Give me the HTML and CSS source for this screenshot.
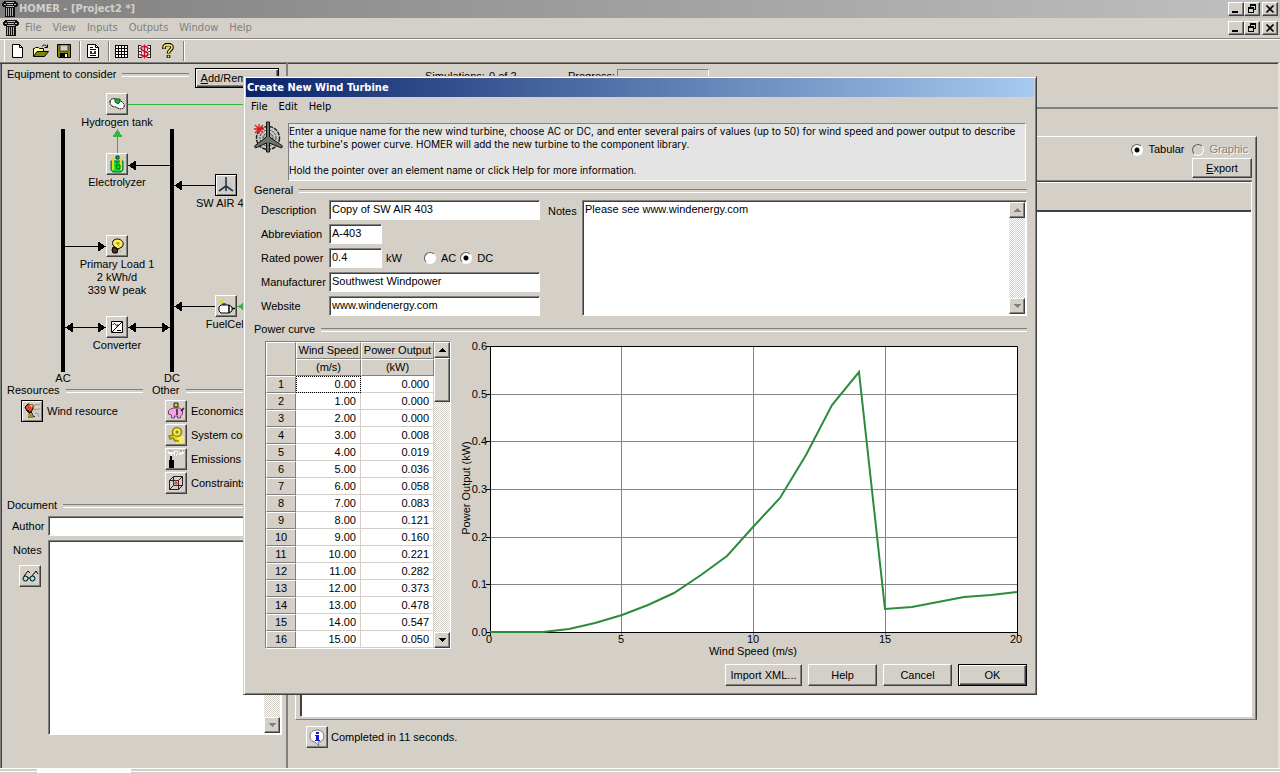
FILE: index.html
```html
<!DOCTYPE html>
<html lang="en">
<head>
<meta charset="utf-8">
<title>HOMER - [Project2 *]</title>
<link rel="stylesheet" href="styles.css">
</head>
<body>
<svg class="defs" aria-hidden="true">
  <symbol id="column" viewBox="0 0 16 16" shape-rendering="crispEdges"><path d="M2 0h12v1h1v1h1v3h-1v1h-2v10H3V6H1V5H0V2h1V1h1z" fill="#111"/><path d="M4.500 7v8M6.500 7v8M8.500 7v8M10.500 7v8" stroke="#aaa"/><path d="M4 1.500h8M2 3.500h2M12 3.500h2M5 3.500h6M4 5.500h8" stroke="#bbb"/></symbol>
  <symbol id="min" viewBox="0 0 12 10" shape-rendering="crispEdges"><path d="M2 7h6v2H2z"/></symbol>
  <symbol id="restore" viewBox="0 0 12 10" shape-rendering="crispEdges"><path d="M4.500 1v2M4 1h6M4 .5h6M9.500 1v5M8 5.500h2M2.500 3v6M2 4h6M2 3.500h6M7.500 3v6M2 8.500h6" fill="none" stroke="#000"/></symbol>
  <symbol id="close" viewBox="0 0 12 10"><path d="M2.500 1.500l7 7M9.500 1.500l-7 7" stroke="#000" stroke-width="1.600"/></symbol>
  <symbol id="up" viewBox="0 0 7 4" shape-rendering="crispEdges"><path d="M3 0h1v1h1v1h1v1h1v1H0V3h1V2h1V1h1z"/></symbol>
  <symbol id="down" viewBox="0 0 7 4" shape-rendering="crispEdges"><path d="M0 0h7v1H6v1H5v1H4v1H3V3H2V2H1V1H0z"/></symbol>
</svg>
<div class="app">
  <header class="titlebar">
    <svg class="i16"><use href="#column"/></svg>
    <h1 class="titlebar-text">HOMER - [Project2 *]</h1>
    <div class="winbtns">
      <button class="winbtn" aria-label="Minimize"><svg><use href="#min"/></svg></button><button class="winbtn" aria-label="Restore"><svg><use href="#restore"/></svg></button><button class="winbtn last" aria-label="Close"><svg><use href="#close"/></svg></button>
    </div>
  </header>
  <nav class="menubar">
    <svg class="i16"><use href="#column"/></svg>
    <div class="menus">
      <button class="menu">File</button><button class="menu">View</button><button class="menu">Inputs</button><button class="menu">Outputs</button><button class="menu">Window</button><button class="menu">Help</button>
    </div>
    <div class="winbtns">
      <button class="winbtn" aria-label="Minimize"><svg><use href="#min"/></svg></button><button class="winbtn" aria-label="Restore"><svg><use href="#restore"/></svg></button><button class="winbtn last" aria-label="Close"><svg><use href="#close"/></svg></button>
    </div>
  </nav>
  <div class="toolbar">
    <button class="tool" aria-label="New"><svg class="i16" viewBox="0 0 16 16"><path d="M2.500 1.500h7l3 3v10h-10z" fill="#fff" stroke="#000"/><path d="M9.500 1.500v3h3" fill="none" stroke="#000"/></svg></button>
    <button class="tool" aria-label="Open"><svg class="i16" viewBox="0 0 16 16"><path d="M.5 13.500v-8h1l1-1h3l1 1h4v3" fill="#ffff9c" stroke="#000"/><path d="M.5 13.500l3.500-5h11.500l-4 5z" fill="#848400" stroke="#000"/><path d="M9 3.500c1-2 4-2 5 .5M14.500 1.500v3h-3" fill="none" stroke="#000"/></svg></button>
    <button class="tool" aria-label="Save"><svg class="i16" viewBox="0 0 16 16"><path d="M1.500 1.500h13v13h-12l-1-1z" fill="#848400" stroke="#000"/><path d="M4 2h8v6H4z" fill="#d4d0c8" stroke="#000" stroke-width=".6"/><path d="M4 10h8v5H4z"/><path d="M9 11h2v3H9z" fill="#fff"/></svg></button>
    <span class="sep"></span>
    <button class="tool" aria-label="Report"><svg class="i16" viewBox="0 0 16 16"><path d="M2.500 1.500h8l3 3v10h-11z" fill="#fff" stroke="#000"/><path d="M10.500 1.500v3h3M5 4.500h3M5 6.500h6M5 12.500h6" fill="none" stroke="#000"/><path d="M5 8h6v3H5z" fill="#333"/><path d="M7 8h2v2H7z" fill="#fff"/></svg></button>
    <span class="sep"></span>
    <button class="tool" aria-label="Table"><svg class="i16" viewBox="0 0 16 16" shape-rendering="crispEdges"><path d="M1 2h13v13H1z" fill="#fff"/><path d="M1.500 2v13M4.500 2v13M7.500 2v13M10.500 2v13M13.500 2v13M1 2.500h13M1 5.500h13M1 8.500h13M1 11.500h13M1 14.500h13" stroke="#000"/></svg></button>
    <button class="tool" aria-label="Costs"><svg class="i16" viewBox="0 0 16 16"><path d="M1 2h13v13H1z" fill="#fff"/><path d="M1.500 2v13M4.500 2v13M10.500 2v13M13.500 2v13M1 2.500h13M1 5.500h13M1 8.500h13M1 11.500h13M1 14.500h13" stroke="#222"/><path d="M11 5.500c-1-3-7-3-7 0s7 2.500 7 5.500-6 3-7.500 0M7.500 1.500v14" fill="none" stroke="#fff" stroke-width="3"/><path d="M11 5.500c-1-3-7-3-7 0s7 2.500 7 5.500-6 3-7.500 0M7.500 1.500v14" fill="none" stroke="#c8102c" stroke-width="1.700"/></svg></button>
    <button class="tool" aria-label="Help"><svg class="i16" viewBox="0 0 16 16"><path d="M4 6V4.500c0-4 8-4 8 0 0 2.500-3.500 2.500-3.500 6M8.500 12v3" fill="none" stroke="#000" stroke-width="3.600"/><path d="M4 5.500v-1c0-3.500 8-3.500 8 0 0 2.500-3.500 2.500-3.500 5.500M8.500 12.500v2" fill="none" stroke="#ffe94a" stroke-width="1.600"/></svg></button>
    <span class="sep"></span>
  </div>
  <main class="work">
    <section class="left">
      <div class="grouprow"><h2 class="group eq">Equipment to consider</h2><button class="btn default addrem"><u>A</u>dd/Remove...</button></div>
      <div class="diagram">
        <svg class="wires" viewBox="0 0 284 296" shape-rendering="crispEdges">
          <path d="M59 41h4v243h-4zM168 41h4v243h-4z"/>
          <path d="M126 16.500h158M115.500 49v16" stroke="#2fb83c" fill="none"/>
          <path d="M115.500 41l5 8h-10zM235 218.500l7-4v8z" fill="#2fb83c"/>
          <path d="M134 77.500h34M180 97.500h34M63 158.500h34M180 218.500h34M70 239.500h28M133 239.500h28" stroke="#000"/>
          <path d="M126 77.500l8-5v10zM172 97.500l8-5v10zM104 158.500l-8-5v10zM172 218.500l8-5v10zM63 239.500l8-5v10zM104 239.500l-8-5v10zM126 239.500l8-5v10zM168 239.500l-8-5v10z"/>
        </svg>
        <div class="node h2"><button class="ibtn" aria-label="Hydrogen tank"><svg class="i18" viewBox="0 0 18 18"><path d="M2 7c0-4 5-4 8-2 5 1 7 5 6 7s-4 3-8 0c-4 0-6-2-6-5z" fill="#fff" stroke="#000" stroke-dasharray="2 .6"/><path d="M7 4h5v3l-2 2-3-2z" fill="#16b51c" stroke="#064"/></svg></button><span>Hydrogen tank</span></div>
        <div class="node el"><button class="ibtn" aria-label="Electrolyzer"><svg class="i18" viewBox="0 0 18 18"><path d="M3 6h12v9l-2 2H5l-2-2z" fill="#17e02a" stroke="#064"/><path d="M5 3v12M13 3v12" fill="none" stroke="#e3dc20" stroke-width="2"/><path d="M8 1h3v3H8z" fill="#2a5" stroke="#042"/><path d="M9 6v3M8 10h4v4H9z" fill="none" stroke="#062"/></svg></button><span>Electrolyzer</span></div>
        <div class="node wt"><button class="ibtn dark" aria-label="SW AIR 403"><svg class="i18" viewBox="0 0 18 18"><circle cx="9" cy="10" r="7" fill="#c5cbd6"/><path d="M9 1v9l7 5M9 10l-7 5M9 10v5" fill="none" stroke="#333" stroke-width="1.600"/></svg></button><span>SW AIR 403</span></div>
        <div class="node pl"><button class="ibtn" aria-label="Primary Load 1"><svg class="i18" viewBox="0 0 18 18"><path d="M7 10C3 8 4 2 9 2s8 4 5 8l-4 2z" fill="#ffee5c" stroke="#000"/><path d="M9 6l2 3M8 6h4" stroke="#a08000"/><path d="M5 10l5 2-1 4H5l-1-3z" fill="#5a2d13" stroke="#000"/><path d="M11 13l3 1-2 2z" fill="#caa8e8"/></svg></button><span>Primary Load 1<br>2 kWh/d<br>339 W peak</span></div>
        <div class="node fc"><button class="ibtn" aria-label="FuelCell"><svg class="i18" viewBox="0 0 18 18"><path d="M4 8h8l3 2v4l-3 2H4l-2-2v-4z" fill="#fff" stroke="#000"/><path d="M12 8v8M15 11.500h3" stroke="#000" stroke-width="1.500"/><path d="M5 7h4" stroke="#000"/><path d="M2 2l5 4M7 1L3 6M2 5h5" stroke="#d8dc1c"/></svg></button><span>FuelCell</span></div>
        <div class="node cv"><button class="ibtn" aria-label="Converter"><svg class="i18" viewBox="0 0 18 18"><path d="M3.500 3.500h11v11h-11z" fill="#fff" stroke="#000"/><path d="M14 4L4 14M5 7c1-2 2-2 3 0s2 0 2-1M9 12.500h4" fill="none" stroke="#000"/></svg></button><span>Converter</span></div>
        <div class="node ac"><span>AC</span></div>
        <div class="node dc"><span>DC</span></div>
      </div>
      <div class="cols">
        <div class="res">
          <h2 class="group">Resources</h2>
          <div class="item indent"><button class="ibtn dark" id="wr" aria-label="Wind resource"><svg class="i18" viewBox="0 0 18 18"><path d="M2 5l3-3 5 1v4l-3 4-3-2z" fill="#e0482a" stroke="#000"/><path d="M6 2l4 1-1 3z" fill="#ecd43c"/><path d="M5 8l2 5M8 9l2 5 2 1M5 15h5" stroke="#000" fill="none"/><path d="M5 12l4-1 1 4-4 1z" fill="#b88a2c"/><path d="M11 4c2-3 4 0 6-2M11 8c3-2 4 1 6-2M12 12c3-3 3 1 4 3" fill="none" stroke="#888"/></svg></button><label for="wr">Wind resource</label></div>
        </div>
        <div class="oth">
          <h2 class="group">Other</h2>
          <div class="item"><button class="ibtn" id="ec" aria-label="Economics"><svg class="i18" viewBox="0 0 18 18"><path d="M1.500 9l2-2 3-1h6l3 2v4l-2 2v2h-3v-2h-3v2h-3v-3l-3-1z" fill="#f3a6e4" stroke="#803878"/><path d="M7 1h4v4H7z" fill="#e3c638" stroke="#222"/><path d="M10 7v6M14 9l3-3" stroke="#222" stroke-width="1.500"/></svg></button><label for="ec">Economics</label></div>
          <div class="item"><button class="ibtn" id="sc" aria-label="System control"><svg class="i18" viewBox="0 0 18 18"><path d="M9 10h8v7H9z" fill="#f5ee62"/><circle cx="10" cy="6" r="4.500" fill="#efe84e" stroke="#908610" stroke-width="1.600"/><circle cx="10" cy="6" r="1.500" fill="#908610"/><path d="M7 9l-5 1 1 3 3-1 2 3h4" fill="#e4d834" stroke="#908610" stroke-width="1.500"/></svg></button><label for="sc">System control</label></div>
          <div class="item"><button class="ibtn" id="em" aria-label="Emissions"><svg class="i18" viewBox="0 0 18 18"><path d="M2 10h5v8H2zM3 6h2v4H3z"/><path d="M1 2l4 2 4-2 4 2 4-2M4 5h6" fill="none" stroke="#fff" stroke-width="2"/><path d="M2 1h4M8 3h4M13 1h4M5 5h4" stroke="#888" stroke-dasharray="2 1"/></svg></button><label for="em">Emissions</label></div>
          <div class="item"><button class="ibtn" id="co" aria-label="Constraints"><svg class="i18" viewBox="0 0 18 18"><path d="M2.500 6.500h9v9h-9zM6.500 2.500h9v9h-9zM2.500 6.500l4-4M11.500 6.500l4-4M11.500 15.500l4-4M2.500 15.500l4-4" fill="none" stroke="#222"/><path d="M6 9h6M9 6v6" stroke="#d02828"/></svg></button><label for="co">Constraints</label></div>
        </div>
      </div>
      <h2 class="group doc">Document</h2>
      <div class="docgrid">
        <label for="author">Author</label><input class="field" id="author">
        <div class="noteside"><label for="pnotes">Notes</label><button class="ibtn" aria-label="View notes"><svg class="i18" viewBox="0 0 18 18"><circle cx="4.500" cy="11.500" r="2.500" fill="#8fe8e4" stroke="#000"/><circle cx="11.500" cy="11.500" r="2.500" fill="#8fe8e4" stroke="#000"/><path d="M3 9l4-5 2 2M11 9l4-5 2 3M7 11h2" fill="none" stroke="#000"/></svg></button></div>
        <div class="memo"><textarea id="pnotes"></textarea><div class="sbar off"><button aria-label="Scroll up"><svg><use href="#up"/></svg></button><button class="end" aria-label="Scroll down"><svg><use href="#down"/></svg></button></div></div>
      </div>
    </section>
    <section class="right">
      <div class="progress"><span class="sims">Simulations:</span><span class="count">0 of 2</span><span class="plabel">Progress:</span><span class="pbar"></span></div>
      <div class="results">
        <div class="frame">
          <div class="view"><input type="radio" name="v" id="tab" checked><label for="tab">Tabular</label><input type="radio" name="v" id="gra" disabled><label for="gra" class="dis">Graphic</label></div>
          <button class="btn export"><u>E</u>xport</button>
          <div class="list"><div class="listhead"></div></div>
        </div>
        <div class="status"><button class="ibtn" aria-label="Information"><svg class="i18" viewBox="0 0 18 18"><path d="M9 2c9 0 9 12 1 12l1 4-4-4C0 13 0 2 9 2z" fill="#fff" stroke="#777"/><path d="M8 4h3v2H8zM7 7h4v5h1v1H7v-1h1V8H7z" fill="#1414d8"/></svg></button><span>Completed in 11 seconds.</span></div>
      </div>
    </section>
  </main>
  <footer class="edge"><span class="task"></span></footer>

  <div class="dialog" role="dialog" aria-labelledby="dt">
    <h2 class="dtitle" id="dt">Create New Wind Turbine</h2>
    <nav class="dmenu"><button class="menu">File</button><button class="menu">Edit</button><button class="menu">Help</button></nav>
    <div class="dbody">
      <div class="intro">
        <svg class="turbine" viewBox="0 0 32 32"><circle cx="14" cy="17" r="11.500" fill="#c9c9c9" stroke="#222" stroke-width="1.500" stroke-dasharray="4 1"/><circle cx="14" cy="17" r="8" fill="none" stroke="#333" stroke-dasharray="2 1"/><circle cx="14" cy="17" r="5" fill="#aaa" stroke="#222" stroke-dasharray="2 1"/><path d="M12.500 1h3v15l13 9-1 2-12-5v9h-3v-9l-11 5-1-2 12-9z" fill="#6d7468" stroke="#111"/><path d="M0 8h10M5 3v10M1 4l8 8M9 4l-8 8" stroke="#e31b1b" stroke-width="1.300"/></svg>
        <p class="info">Enter a unique name for the new wind turbine, choose AC or DC, and enter several pairs of values (up to 50) for wind speed and power output to describe the turbine's power curve. HOMER will add the new turbine to the component library.<br><br>Hold the pointer over an element name or click Help for more information.</p>
      </div>
      <h3 class="group">General</h3>
      <div class="general">
        <div class="form">
          <label for="de">Description</label><input class="field" id="de" value="Copy of SW AIR 403">
          <label for="ab">Abbreviation</label><input class="field short" id="ab" value="A-403">
          <label for="rp">Rated power</label>
          <div class="power"><input class="field short" id="rp" value="0.4"><span class="unit">kW</span><input type="radio" name="c" id="rac"><label for="rac">AC</label><input type="radio" name="c" id="rdc" checked><label for="rdc">DC</label></div>
          <label for="mf">Manufacturer</label><input class="field" id="mf" value="Southwest Windpower">
          <label for="ws">Website</label><input class="field" id="ws" value="www.windenergy.com">
        </div>
        <label class="nlabel" for="nt">Notes</label>
        <div class="memo"><textarea id="nt">Please see www.windenergy.com</textarea><div class="sbar off"><button aria-label="Scroll up"><svg><use href="#up"/></svg></button><button class="end" aria-label="Scroll down"><svg><use href="#down"/></svg></button></div></div>
      </div>
      <h3 class="group">Power curve</h3>
      <div class="curve">
        <div class="tablebox">
          <table class="pairs">
            <thead><tr><th rowspan="2" class="corner"></th><th>Wind Speed</th><th>Power Output</th></tr><tr><th>(m/s)</th><th>(kW)</th></tr></thead>
            <tbody>
              <tr><th>1</th><td class="focus">0.00</td><td>0.000</td></tr>
              <tr><th>2</th><td>1.00</td><td>0.000</td></tr>
              <tr><th>3</th><td>2.00</td><td>0.000</td></tr>
              <tr><th>4</th><td>3.00</td><td>0.008</td></tr>
              <tr><th>5</th><td>4.00</td><td>0.019</td></tr>
              <tr><th>6</th><td>5.00</td><td>0.036</td></tr>
              <tr><th>7</th><td>6.00</td><td>0.058</td></tr>
              <tr><th>8</th><td>7.00</td><td>0.083</td></tr>
              <tr><th>9</th><td>8.00</td><td>0.121</td></tr>
              <tr><th>10</th><td>9.00</td><td>0.160</td></tr>
              <tr><th>11</th><td>10.00</td><td>0.221</td></tr>
              <tr><th>12</th><td>11.00</td><td>0.282</td></tr>
              <tr><th>13</th><td>12.00</td><td>0.373</td></tr>
              <tr><th>14</th><td>13.00</td><td>0.478</td></tr>
              <tr><th>15</th><td>14.00</td><td>0.547</td></tr>
              <tr><th>16</th><td>15.00</td><td>0.050</td></tr>
            </tbody>
          </table>
          <div class="sbar"><button aria-label="Scroll up"><svg><use href="#up"/></svg></button><span class="thumb"></span><button class="end" aria-label="Scroll down"><svg><use href="#down"/></svg></button></div>
        </div>
        <svg class="chart" viewBox="0 0 571 317" role="img" aria-label="Power output against wind speed">
          <path d="M34 5h527v286H34z" fill="#fff"/>
          <path d="M34 53.500h527M34 100.500h527M34 148.500h527M34 196.500h527M34 243.500h527M165.500 5v290M297.500 5v290M429.500 5v290" stroke="#848484"/>
          <path d="M30 5.500h531.500V295M30 291.500h531.500M34.500 5v290M30 53.500h4M30 100.500h4M30 148.500h4M30 196.500h4M30 243.500h4" fill="none" stroke="#000"/>
          <path d="M34 291H87L113 288 139 282 166 274 192 264 218 252 245 234 271 215 297 186 324 157 350 114 376 64 403 31 429 268 456 266 482 261 508 256 535 254 561 251" fill="none" stroke="#2a8c3c" stroke-width="2"/>
          <g class="ytick"><text x="31" y="9">0.6</text><text x="31" y="57">0.5</text><text x="31" y="104">0.4</text><text x="31" y="152">0.3</text><text x="31" y="200">0.2</text><text x="31" y="247">0.1</text><text x="31" y="295">0.0</text></g>
          <g class="xtick"><text x="33" y="302">0</text><text x="165" y="302">5</text><text x="297" y="302">10</text><text x="429" y="302">15</text><text x="560" y="302">20</text><text x="297" y="314">Wind Speed (m/s)</text><text transform="translate(14 147) rotate(-90)">Power Output (kW)</text></g>
        </svg>
      </div>
      <div class="actions"><button class="btn wide">Import XML...</button><button class="btn">Help</button><button class="btn">Cancel</button><button class="btn default">OK</button></div>
    </div>
  </div>
</div>
</body>
</html>
```
FILE: styles.css
```css
* { box-sizing: border-box; }
body {
  margin: 0;
  background: #d4d0c8;
  color: #000;
  font: 11px/13px "Liberation Sans", Arial, sans-serif;
}
h1, h2, h3, p { margin: 0; font: inherit; }
button, input, textarea { font: inherit; color: inherit; margin: 0; border-radius: 0; }
button { padding: 0; border: 0; background: #d4d0c8; }
svg { display: block; flex: none; }
.defs { position: absolute; width: 0; height: 0; }
.i16 { width: 16px; height: 16px; }
.i18 { width: 18px; height: 18px; }

.app { position: relative; display: flex; flex-direction: column; min-height: 100vh; overflow: hidden; }
.titlebar, .menubar { display: flex; align-items: center; padding: 0 2px; }
.titlebar { height: 18px; background: linear-gradient(90deg, #808080, #c0c0c0); color: #d4d0c8; }
.titlebar-text { flex: 1; padding-left: 1px; font: bold 11px/14px "DejaVu Sans Condensed", Tahoma, sans-serif; }
.menubar { height: 20px; padding-left: 3px; }
.menus { flex: 1; display: flex; }
.menu { padding: 0 5px 0 6px; background: none; font: 11px/14px "DejaVu Sans Condensed", Tahoma, sans-serif; }
.menubar .menu { color: #808080; }
.winbtns { display: flex; }
.winbtn { width: 16px; height: 14px; padding: 1px; border: 1px solid; border-color: #fff #404040 #404040 #fff; box-shadow: inset -1px -1px 0 #808080; }
.winbtn svg { width: 12px; height: 10px; }
.winbtn.last { margin-left: 2px; }

.toolbar { display: flex; align-items: center; height: 24px; padding-left: 10px; border-top: 1px solid #808080; box-shadow: inset 0 1px 0 #fff, inset 4px 0 0 #d4d0c8, inset 5px 0 0 #fff; }
.tool { width: 23px; height: 20px; }
.sep { width: 2px; height: 20px; margin-right: 4px; border-left: 1px solid #808080; border-right: 1px solid #fff; }

.work { flex: 1; display: flex; border-top: 1px solid #808080; border-right: 2px solid #e4e1dc; box-shadow: inset 0 1px 0 #404040, inset 1px 0 0 #808080, inset 2px 0 0 #404040; }
.left { flex: none; width: 288px; display: flex; flex-direction: column; padding: 5px 0 33px 2px; border-right: 2px solid #808080; }
.right { flex: 1; display: flex; flex-direction: column; padding-top: 2px; }

.group { display: flex; align-items: center; gap: 6px; line-height: 13px; }
.group::after { content: ""; flex: 1; height: 2px; border-top: 1px solid #808080; border-bottom: 1px solid #fff; }
.grouprow { display: flex; align-items: flex-start; gap: 6px; padding: 0 7px 0 5px; height: 20px; }
.eq { flex: 1; }

.btn { width: 69px; height: 22px; border: 1px solid; border-color: #fff #404040 #404040 #fff; box-shadow: inset -1px -1px 0 #808080; }
.btn.default { border-color: #000; box-shadow: inset 1px 1px 0 #fff, inset -1px -1px 0 #404040, inset -2px -2px 0 #808080; }
.btn.wide { width: 77px; }
.btn.addrem { width: 84px; height: 20px; }
.ibtn { flex: none; width: 22px; height: 22px; padding: 1px; border: 1px solid; border-color: #fff #404040 #404040 #fff; box-shadow: inset -1px -1px 0 #808080; }
.ibtn.dark { border-color: #000; box-shadow: inset 1px 1px 0 #fff, inset -1px -1px 0 #808080; }

.diagram { position: relative; height: 296px; overflow: hidden; }
.wires { width: 284px; height: 296px; }
.node { position: absolute; display: flex; flex-direction: column; align-items: center; gap: 1px; width: 90px; text-align: center; white-space: nowrap; }
.h2 { left: 70px; top: 5px; }
.el { left: 70px; top: 65px; }
.pl { left: 70px; top: 147px; }
.cv { left: 70px; top: 228px; }
.wt { left: 179px; top: 86px; }
.fc { left: 179px; top: 207px; }
.ac { left: 16px; top: 284px; }
.dc { left: 125px; top: 284px; }

.cols { display: flex; padding: 0 6px 0 5px; gap: 9px; }
.res { width: 136px; }
.oth { flex: 1; }
.item { display: flex; align-items: center; gap: 4px; margin: 3px 0 2px 13px; }
.item + .item { margin-top: 2px; }
.item.indent { margin-left: 14px; }
.doc { margin: 3px 6px 0 5px; }
.docgrid { flex: 1; display: grid; grid-template-columns: 36px 1fr; grid-template-rows: 20px 1fr; gap: 4px 0; padding: 4px 4px 0 10px; align-items: center; }
.docgrid > .memo, .noteside { align-self: stretch; }
.noteside { padding-top: 4px; }
.noteside label { display: block; margin: 0 0 8px 1px; }
.noteside .ibtn { margin-left: 7px; }

.field { width: 100%; height: 20px; padding: 0 2px 2px; border: 1px solid; border-color: #808080 #fff #fff #808080; box-shadow: inset 1px 1px 0 #404040; background: #fff; outline: 0; }
.field.short { width: 53px; }
.memo { display: flex; padding: 1px 1px 1px 2px; border: 1px solid; border-color: #808080 #fff #fff #808080; box-shadow: inset 1px 1px 0 #404040; background: #fff; }
.memo textarea { flex: 1; min-width: 0; padding: 1px 0; border: 0; resize: none; overflow: hidden; outline: 0; background: #fff; }
.sbar { width: 16px; display: flex; flex-direction: column; background: repeating-conic-gradient(#fff 0 25%, #d4d0c8 0 50%) 0 0 / 2px 2px; }
.sbar button, .thumb { display: grid; place-items: center; height: 16px; background: #d4d0c8; border: 1px solid; border-color: #fff #404040 #404040 #fff; box-shadow: inset -1px -1px 0 #808080; }
.sbar svg { width: 7px; height: 4px; }
.sbar.off svg { fill: #808080; }
.sbar .end { margin-top: auto; }
.sbar .thumb { height: 44px; }

input[type="radio"] { appearance: none; width: 12px; height: 12px; border-radius: 50%; border: 1px solid; border-color: #606060 #fff #fff #606060; background: #fff; }
input[type="radio"]:checked { background: radial-gradient(circle, #000 0 2px, #fff 3px); }
input[type="radio"]:disabled { background: #d4d0c8; }

.progress { display: flex; align-items: center; height: 44px; padding: 0 0 20px 137px; border-bottom: 2px solid #808080; }
.sims { width: 64px; }
.count { width: 79px; }
.plabel { width: 49px; }
.pbar { width: 92px; height: 14px; border: 1px solid; border-color: #808080 #fff #fff #808080; }
.results { flex: 1; display: flex; flex-direction: column; padding: 27px 21px 20px 7px; }
.frame { flex: 1; display: flex; flex-direction: column; padding: 6px 4px 2px; border: 1px solid; border-color: #fff #404040 #808080 #fff; box-shadow: inset -1px 0 0 #808080; }
.view { display: flex; align-items: center; justify-content: flex-end; gap: 5px; padding-right: 4px; }
.view label:not(.dis) { margin-right: 3px; }
.dis { color: #808080; text-shadow: 1px 1px 0 #fff; }
.export { align-self: flex-end; width: 60px; height: 20px; margin: 2px 0 3px; }
.list { flex: 1; border: 1px solid; border-color: #404040 #fff #fff #404040; box-shadow: inset 1px 0 0 #404040, 0 -1px 0 #808080; background: #fff; }
.listhead { height: 30px; background: #d4d0c8; border-top: 1px solid #fff; border-bottom: 2px solid #404040; }
.status { display: flex; align-items: center; gap: 3px; padding: 6px 0 0 11px; }

.edge { display: flex; height: 5px; border-top: 1px solid #fff; box-shadow: inset 0 2px 0 #d4d0c8, inset 0 3px 0 #fff; }
.task { width: 94px; margin-left: 37px; background: #fff; }

.dialog { position: absolute; left: 243px; right: 243px; top: 76px; padding: 1px; background: #d4d0c8; border: 1px solid; border-color: #d4d0c8 #404040 #404040 #d4d0c8; box-shadow: inset 1px 1px 0 #fff, inset -1px -1px 0 #808080; }
.dtitle { margin: 0 1px; padding: 3px 1px 2px; background: linear-gradient(90deg, #0a246a, #a6caf0); color: #fff; font: bold 11px/14px "DejaVu Sans Condensed", Tahoma, sans-serif; }
.dmenu { display: flex; height: 20px; align-items: center; }
.dbody { padding: 4px 8px 7px 9px; }
.intro { display: flex; align-items: flex-start; gap: 2px; padding-right: 1px; margin-bottom: 3px; }
.turbine { width: 32px; height: 32px; }
.info { flex: 1; margin-top: 2px; padding: 1px 0 3px; border: 1px solid; border-color: #808080 #fff #fff #808080; background: #e4e4e4; font-size: 10px; font-family: Inter, "Liberation Sans", sans-serif; }
.general { display: flex; padding: 3px 0 7px 7px; }
.form { display: grid; grid-template-columns: 68px 211px; gap: 4px 0; align-items: center; }
.power { display: flex; align-items: center; }
.unit { width: 42px; padding-left: 4px; }
.power label { margin: 0 4px 0 5px; }
.nlabel { width: 42px; padding: 5px 0 0 8px; }
.general .memo { flex: 1; }
.curve { display: flex; padding: 5px 0 0 11px; align-items: flex-start; }
.tablebox { flex: none; display: flex; border: 1px solid; border-color: #808080 #fff #fff #808080; }
.pairs { border-collapse: separate; border-spacing: 0; table-layout: fixed; width: 168px; background: #fff; }
.pairs th, .pairs td { height: 17px; padding: 0; font-weight: normal; line-height: 15px; }
.pairs th { background: #d4d0c8; border: 1px solid; border-color: #fff #808080 #808080 #fff; text-align: center; white-space: nowrap; }
.pairs .corner { width: 30px; }
.pairs thead th:nth-child(2) { width: 65px; }
.pairs td { padding-right: 4px; border-right: 1px solid #d4d0c8; border-bottom: 1px solid #d4d0c8; text-align: right; }
.pairs .focus { outline: 1px dotted #000; outline-offset: -1px; }
.chart { flex: 1; min-width: 0; margin-left: 5px; fill: #000; font-size: 11px; }
.ytick { text-anchor: end; }
.xtick { text-anchor: middle; }
.actions { display: flex; justify-content: flex-end; gap: 6px; padding-top: 6px; }
```
